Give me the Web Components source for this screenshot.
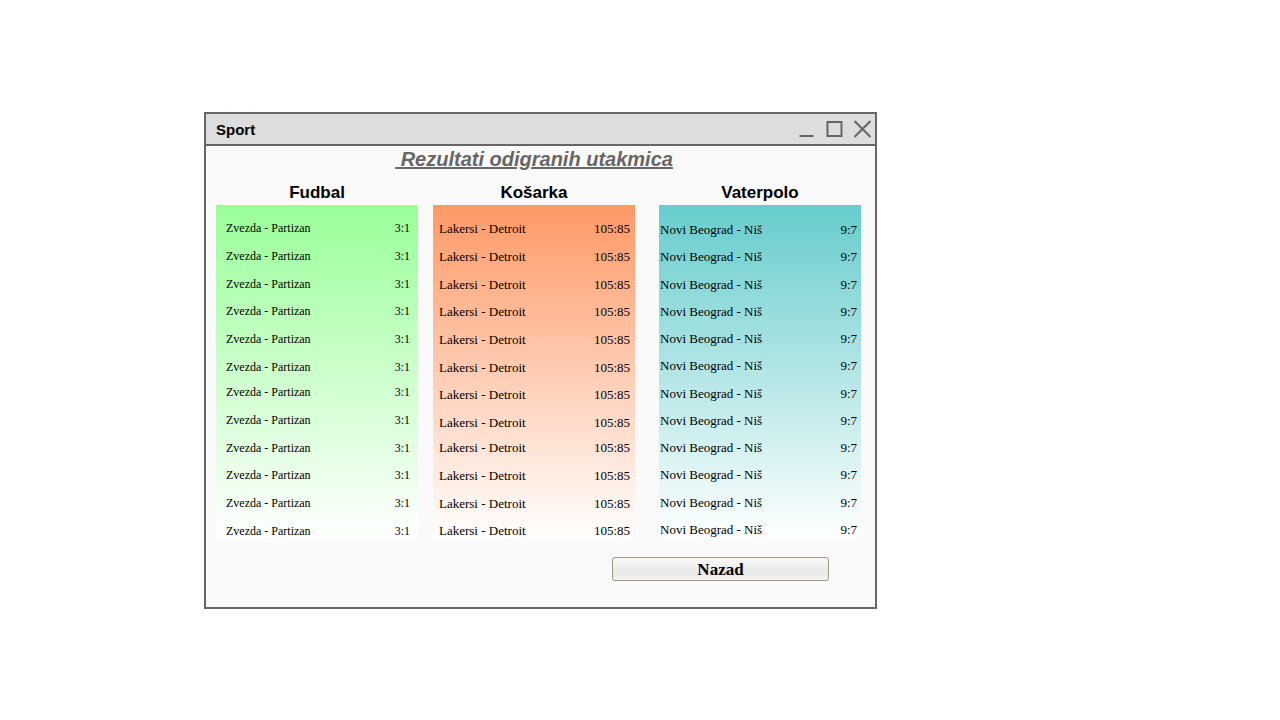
<!DOCTYPE html>
<html lang="sr-Latn">
<head>
<meta charset="utf-8">
<meta name="viewport" content="width=device-width, initial-scale=1">
<title>Sport</title>
<style>
  body { margin: 0; padding: 112px 403px 111px 204px; background: #fff; color: #000; font-family: "Liberation Sans", Arial, sans-serif; }
</style>
</head>
<body>
<app-window caption="Sport">
  <results-title>&nbsp;Rezultati odigranih utakmica</results-title>
  <results-board>
    <score-column heading="Fudbal" match="Zvezda - Partizan" score="3:1" groups="6,6"
      style="--tint:#99ff99;--size:12px;--left:10px;--right:8px;--top:2px"></score-column>
    <score-column heading="Košarka" match="Lakersi - Detroit" score="105:85" groups="8,4"
      style="--tint:#ff9966;--size:13px;--left:6px;--right:5px;--top:3px"></score-column>
    <score-column heading="Vaterpolo" match="Novi Beograd - Niš" score="9:7" groups="12" dense
      style="--tint:#66cccc;--size:13px;--left:1px;--right:4px;--top:5px;margin-left:9px"></score-column>
  </results-board>
  <back-button>Nazad</back-button>
</app-window>

<script>
class AppWindow extends HTMLElement {
  connectedCallback() {
    this.attachShadow({ mode: 'open' }).innerHTML = `
      <style>
        :host { display: block; border: 2px solid #666; background: #fafafa; }
        header { display: flex; align-items: center; justify-content: space-between;
          min-height: 30px; padding: 0 3px 0 10px; border-bottom: 2px solid #666; background: #ddd; }
        h1 { margin: 0; font-size: 15px; line-height: 20px; padding-top: 2px; }
        .controls { display: flex; gap: 10px; }
        button { display: block; width: 18px; height: 18px; padding: 0; border: 0; background: none; }
        svg { display: block; fill: none; stroke: #666; stroke-width: 2; }
        main { padding: 0 14px 26px 10px; }
      </style>
      <header>
        <h1></h1>
        <div class="controls">
          <button aria-label="Umanji"><svg width="18" height="18"><path d="M1.5 16H15.5"/></svg></button>
          <button aria-label="Uvećaj"><svg width="18" height="18"><path d="M1.5 2H15.5V16H1.5Z"/></svg></button>
          <button aria-label="Zatvori"><svg width="18" height="18"><path d="M0.5 1L16.5 17M16.5 1L0.5 17"/></svg></button>
        </div>
      </header>
      <main><slot></slot></main>`;
    this.shadowRoot.querySelector('h1').textContent = this.getAttribute('caption');
  }
}

class ResultsTitle extends HTMLElement {
  connectedCallback() {
    this.attachShadow({ mode: 'open' }).innerHTML = `
      <style>
        :host { display: block; }
        h2 { margin: 0; padding: 1px 9px 0 0; color: #666; font-size: 20px; line-height: 24px;
          font-style: italic; text-align: center; text-decoration: underline; }
      </style>
      <h2><slot></slot></h2>`;
  }
}

class ResultsBoard extends HTMLElement {
  connectedCallback() {
    this.attachShadow({ mode: 'open' }).innerHTML = `
      <style>:host { display: flex; gap: 15px; padding-top: 8px; }</style><slot></slot>`;
  }
}

class ScoreColumn extends HTMLElement {
  connectedCallback() {
    const row = `<tr><td>${this.getAttribute('match')}</td><td>${this.getAttribute('score')}</td></tr>`;
    const groups = this.getAttribute('groups').split(',')
      .map(n => `<tbody>${row.repeat(Number(n))}</tbody>`).join('');
    this.attachShadow({ mode: 'open' }).innerHTML = `
      <style>
        :host { display: block; flex: 1 1 0; min-width: 0; }
        h3 { margin: 0; padding-top: 2px; font-size: 17px; line-height: 24px; text-align: center; }
        .panel { box-sizing: border-box; min-height: 333px; padding: var(--top) var(--right) 0 var(--left);
          background: linear-gradient(var(--tint), #fff); }
        table { width: 100%; border-collapse: collapse; font: var(--size)/14px "Liberation Serif", "Times New Roman", serif; }
        td { padding: 0; vertical-align: bottom; white-space: nowrap; }
        td:last-child { text-align: right; }
        tr { height: 28px; }
        tr:nth-child(3n+4) { height: 27px; }
        tbody + tbody tr:first-child { height: 25px; }
        :host([dense]) tr { height: 27px; }
        :host([dense]) tr:nth-child(4n+3) { height: 28px; }
      </style>
      <h3 id="name">${this.getAttribute('heading')}</h3>
      <div class="panel"><table aria-labelledby="name">${groups}</table></div>`;
  }
}

class BackButton extends HTMLElement {
  connectedCallback() {
    this.attachShadow({ mode: 'open' }).innerHTML = `
      <style>
        :host { display: flex; justify-content: flex-end; padding: 19px 32px 0 0; }
        button { box-sizing: border-box; width: 217px; height: 24px; padding: 2px 0 0; color: #000;
          border: 1px solid #a39482; border-radius: 3px;
          background: linear-gradient(#fafafa, #e8e8e8 70%, #f4f4f4);
          font: bold 17px/20px "Liberation Serif", "Times New Roman", serif; }
      </style>
      <button type="button"><slot></slot></button>`;
  }
}

customElements.define('app-window', AppWindow);
customElements.define('results-title', ResultsTitle);
customElements.define('results-board', ResultsBoard);
customElements.define('score-column', ScoreColumn);
customElements.define('back-button', BackButton);
</script>
</body>
</html>
